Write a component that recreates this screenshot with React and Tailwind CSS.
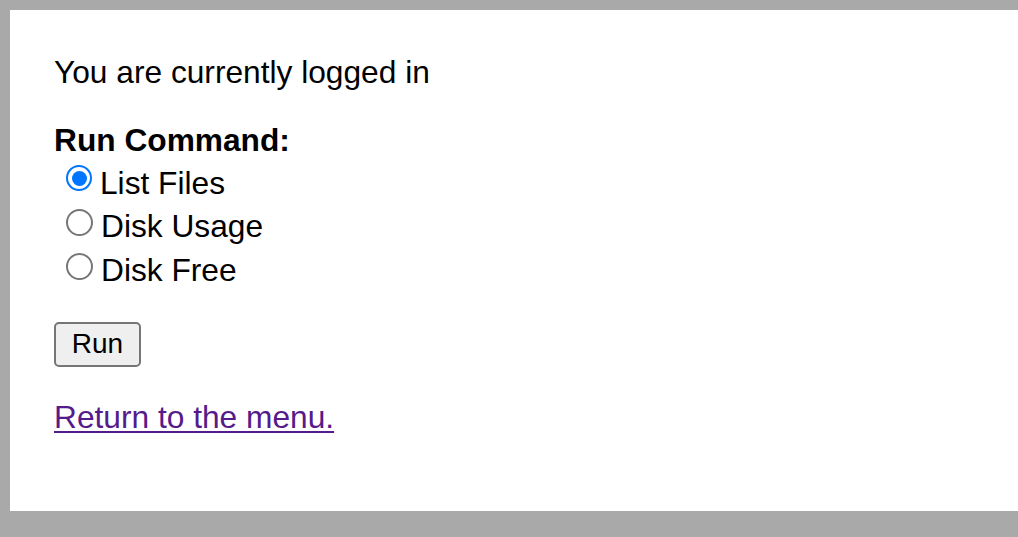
export default function App() {
  const items = [
    { label: "List Files", checked: true },
    { label: "Disk Usage", checked: false },
    { label: "Disk Free", checked: false },
  ];
  return (
    <div
      className="h-[537px] w-[1018px] overflow-hidden bg-[#a9a9a9] pl-[10px] pt-[10px]"
      style={{ fontFamily: '"Liberation Sans", Arial, sans-serif' }}
    >
      <div className="h-[501px] bg-white px-[44px] pt-[44px] text-black">
        <p className="m-0 text-[31.7px] leading-[36px]">You are currently logged in</p>
        <div className="mt-[32px] text-[31.7px] font-bold leading-[36px]">Run Command:</div>
        <div className="mt-[4px] flex flex-col">
          {items.map((it) => (
            <label key={it.label} className="flex h-[43.4px] items-start text-[31.7px] leading-[43.4px]">
              {it.checked ? (
                <span className="ml-[12px] mr-[8px] mt-[3px] flex h-[26px] w-[26px] shrink-0 items-center justify-center rounded-full border-[2.5px] border-[#0075ff] bg-white">
                  <span className="h-[15px] w-[15px] rounded-full bg-[#0075ff]" />
                </span>
              ) : (
                <span className="ml-[12px] mr-[8px] mt-[4px] block h-[27px] w-[27px] shrink-0 rounded-full border-2 border-[#767676] bg-white" />
              )}
              <span>{it.label}</span>
            </label>
          ))}
        </div>
        <button className="mt-[29.5px] flex h-[45px] w-[87px] items-center justify-center rounded-[5px] border-2 border-[#767676] bg-[#efefef] text-[28px] leading-none text-black">
          Run
        </button>
        <div className="mt-[32px] text-[31.7px] leading-[36px]">
          <a href="#" className="text-[#551a8b] underline decoration-[2px] underline-offset-[3px]">
            Return to the menu.
          </a>
        </div>
      </div>
    </div>
  );
}
